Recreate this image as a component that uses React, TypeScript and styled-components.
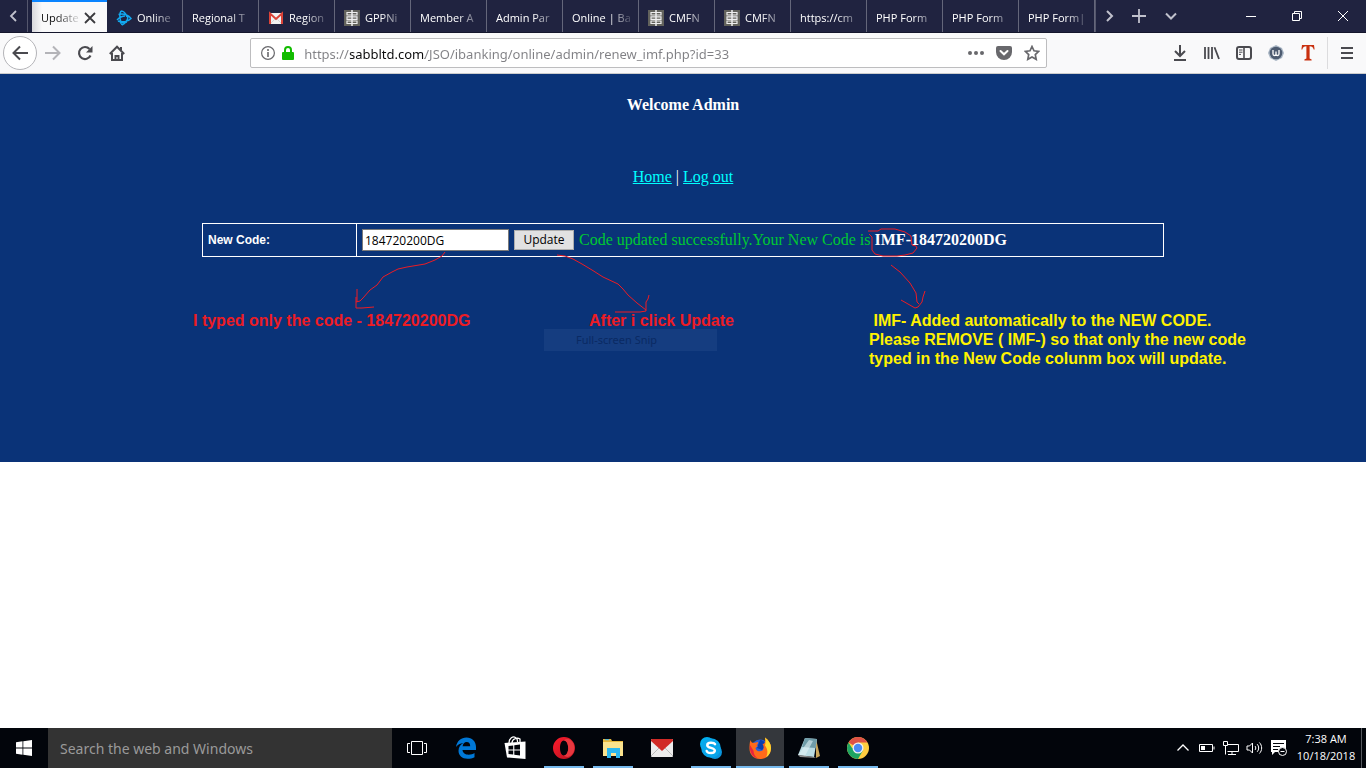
import React from "react";
import styled, { createGlobalStyle, css } from "styled-components";

const ui = `"Open Sans", "Noto Sans", sans-serif`;
const uiWide = `"Noto Sans", "Open Sans", sans-serif`;
const arial = `"Liberation Sans", Arial, sans-serif`;
const times = `"Liberation Serif", "Times New Roman", serif`;

const GlobalStyle = createGlobalStyle`
  *, *::before, *::after { box-sizing: border-box; }
  body { margin: 0; background: #fff; overflow-x: hidden; }
  button { font: inherit; color: inherit; border: 0; padding: 0; background: none; }
  svg { display: block; flex: none; }
`;

const Screen = styled.div`
  display: flex;
  flex-direction: column;
  min-height: 100vh;
`;

/* ---------- Tab strip ---------- */

const TabStrip = styled.header`
  display: flex;
  height: 33px;
  background: #202340;
  border-bottom: 1px solid #14162c;
  color: #fff;
  font: 500 11px/16px ${ui};
`;

const StripButton = styled.button<{ $width: number; $edge?: boolean }>`
  display: flex;
  flex: none;
  align-items: center;
  justify-content: center;
  width: ${(p) => p.$width}px;
  height: 32px;
  color: #c0c1cc;
  ${(p) => p.$edge && css`
    border-right: 1px solid #55576d;
  `}
`;

const TabList = styled.div`
  display: flex;
  flex: 0 1 auto;
  min-width: 0;
  margin-left: 4px;
  overflow: hidden;
`;

const Tab = styled.button<{ $active?: boolean }>`
  display: flex;
  flex: none;
  align-items: center;
  gap: 5px;
  width: 76px;
  height: 33px;
  padding: 2px 3px 0 9px;
  border-right: 1px solid #64667a;
  text-align: left;
  ${(p) => p.$active && css`
    width: 75px;
    border-right: 0;
    border-top: 2px solid #0a84ff;
    background: linear-gradient(90deg, #d8d8dc, #f9f9fa 10px);
    color: #0c0c0d;
    padding: 0 9px;
    gap: 0;
  `}
`;

const TabLabel = styled.span`
  flex: 1;
  min-width: 0;
  white-space: nowrap;
  mask-image: linear-gradient(90deg, #000 calc(100% - 26px), transparent);
`;

const StripTail = styled.div`
  display: flex;
  flex: none;
  border-left: 1px solid #55576d;
`;

const WindowControls = styled.div`
  display: flex;
  margin-left: auto;
`;

/* ---------- Navigation toolbar ---------- */

const Toolbar = styled.nav`
  display: flex;
  align-items: center;
  height: 41px;
  padding: 0 3px;
  background: #f9f9fa;
  border-bottom: 1px solid #ccc;
  color: #4a4a4f;
`;

const ToolButton = styled.button<{ $faded?: boolean }>`
  display: flex;
  flex: none;
  align-items: center;
  justify-content: center;
  width: 32px;
  height: 32px;
  color: ${(p) => (p.$faded ? "#b4b4b8" : "#4a4a4f")};
`;

const BackButton = styled(ToolButton)`
  width: 34px;
  height: 34px;
  border: 1px solid #b4b4b8;
  border-radius: 50%;
  background: #fff;
`;

const Spacer = styled.div`
  flex: 5 1 0;
`;

const AddressSlot = styled.div`
  flex: 34 1 0;
  min-width: 0;
`;

const AddressBar = styled.form`
  display: flex;
  align-items: center;
  height: 30px;
  padding: 0 0 0 8px;
  border: 1px solid #bdbdbf;
  border-radius: 2px;
  background: #fff;
  color: #6b6b6e;
`;

const AddressInput = styled.input`
  flex: 1;
  min-width: 0;
  height: 28px;
  margin-left: 8px;
  padding: 2px 0 0;
  border: 0;
  outline: 0;
  font: 13px/26px ${uiWide};
  color: transparent;
  background: linear-gradient(90deg, #808084 46px, #0c0c0d 46px, #0c0c0d 121px, #808084 121px);
  background-clip: text;
`;

const BarIcon = styled.button`
  display: flex;
  flex: none;
  align-items: center;
  justify-content: center;
  width: 28px;
  height: 28px;
  color: #68686c;
`;

const SiteInfo = styled(BarIcon)`
  width: 37px;
  gap: 7px;
`;

const MenuSlot = styled.div`
  display: flex;
  margin-left: 3px;
  padding-left: 3px;
  border-left: 1px solid #dcdcde;
`;

/* ---------- Web page ---------- */

const Page = styled.main`
  display: flex;
  flex-direction: column;
  align-items: center;
  padding: 22px 0 94px;
  background: #0a3378;
  color: #fff;
  font: 16px/18px ${times};
`;

const Heading = styled.h1`
  margin: 0 0 54px;
  font-size: 16px;
  font-weight: bold;
`;

const Links = styled.p`
  margin: 0 0 37px;
  a { color: #0ff; }
`;

const Stage = styled.div`
  position: relative;
  width: 980px;
`;

const CodeTable = styled.table`
  width: 962px;
  height: 34px;
  margin: 0 9px;
  border-collapse: collapse;
  th, td {
    padding: 0 5px;
    border: 1px solid #fff;
    text-align: left;
    white-space: nowrap;
  }
  th {
    width: 154px;
    font: bold 12px/16px ${arial};
  }
`;

const Fields = styled.div`
  display: flex;
  align-items: center;
  gap: 5px;
`;

const CodeInput = styled.input`
  width: 147px;
  height: 22px;
  padding: 0 2px;
  border: 1px solid #7a7a7a;
  background: #fff;
  color: #000;
  font: 12px/18px ${ui};
`;

const UpdateButton = styled.button`
  width: 60px;
  height: 20px;
  border: 1px solid #adadad;
  background: #e1e1e1;
  color: #000;
  font: 12px/18px ${ui};
`;

const Result = styled.span`
  color: #00c832;
  b { color: #fff; }
`;

const Notes = styled.div`
  display: grid;
  grid-template-columns: 396px 280px 1fr;
  margin-top: 54px;
  font: bold 16px/19px ${arial};
`;

const Note = styled.p<{ $tone: string }>`
  margin: 0;
  color: ${(p) => p.$tone};
  white-space: pre;
`;

const GhostMenu = styled.div`
  position: absolute;
  top: 106px;
  left: 351px;
  width: 173px;
  height: 22px;
  padding-left: 32px;
  background: #153d80;
  color: #0a2a63;
  font: 11px/22px ${uiWide};
`;

const Ink = styled.svg`
  position: absolute;
  top: 0;
  left: 0;
  overflow: visible;
  pointer-events: none;
`;

/* ---------- Taskbar ---------- */

const Taskbar = styled.footer`
  display: flex;
  height: 40px;
  margin-top: auto;
  background: #02050b;
  color: #fff;
`;

const StartButton = styled.button`
  display: flex;
  flex: none;
  align-items: center;
  justify-content: center;
  width: 48px;
`;

const SearchBox = styled.input`
  flex: 0 1 344px;
  min-width: 0;
  padding: 1px 12px 0;
  border: 0;
  background: #333;
  color: #fff;
  font: 14px/20px ${uiWide};
  &::placeholder { color: #9a9a9a; opacity: 1; }
`;

const Apps = styled.div`
  display: flex;
  gap: 1px;
  margin-left: 1px;
`;

const AppButton = styled.button<{ $running?: boolean; $active?: boolean }>`
  position: relative;
  display: flex;
  align-items: center;
  justify-content: center;
  width: 48px;
  background: ${(p) => (p.$active ? "#34373c" : "none")};
  &::after {
    content: "";
    position: absolute;
    bottom: 0;
    left: ${(p) => (p.$active ? 0 : 4)}px;
    right: ${(p) => (p.$active ? 0 : 4)}px;
    height: 2px;
    background: ${(p) => (p.$running ? "#76b9ed" : "none")};
  }
`;

const Tray = styled.div`
  display: flex;
  margin-left: auto;
`;

const TrayButton = styled.button`
  display: flex;
  align-items: center;
  justify-content: center;
  width: 24px;
`;

const Clock = styled.button`
  width: 71px;
  padding-bottom: 3px;
  border-right: 1px solid #55585e;
  font: 11px/17px ${ui};
  text-align: center;
`;

const ShowDesktop = styled.button`
  width: 4px;
`;

/* ---------- Drawings ---------- */

type LineProps = { d: string; w?: number; s?: number; color?: string };
const Line = ({ d, w = 2, s = 16, color = "currentColor" }: LineProps) => (
  <svg width={s} height={s} viewBox="0 0 16 16" fill="none" stroke={color} strokeWidth={w} aria-hidden>
    <path d={d} />
  </svg>
);

const BattleIcon = () => (
  <svg width="16" height="16" viewBox="0 0 16 16" fill="none" stroke="#12a9f0" strokeWidth="1.5">
    <path d="M5 1c-2 3-1 9 1 14M5 1c3 0 5 3 6 6M2.500 4.500C7 3.500 12 5 15 8.500 12 12 6 12.500 2 11M6 15c3-1 6-5 6-9M1 10c2-2 5-4 8-4M4 13l7-1" />
  </svg>
);

const GmailIcon = () => (
  <svg width="16" height="16" viewBox="0 0 16 16">
    <path d="M1 3h14v11H1z" fill="#f2f2f2" />
    <path d="M2 14V3.500l6 5.500 6-5.500V14" fill="none" stroke="#dc4338" strokeWidth="2" />
    <path d="M3 13l4-4M13 13L9 9" stroke="#d5d5d5" />
  </svg>
);

const CmsIcon = () => (
  <svg width="16" height="16" viewBox="0 0 16 16">
    <path d="M0 0h16v16H0z" fill="#62625c" />
    <path d="M3 2.500h10v2.500H3zM3 6.800h10v2.500H3zM3 11h10v2.500H3z" fill="none" stroke="#eee" strokeWidth="1.200" />
    <path d="M8 0v16" stroke="#eee" strokeWidth="1.500" />
  </svg>
);

const InfoIcon = () => (
  <svg width="14" height="14" viewBox="0 0 14 14" fill="none" stroke="currentColor">
    <circle cx="7" cy="7" r="6.400" strokeWidth="1.2" />
    <path d="M7 3v2M7 6v5" strokeWidth="1.6" />
  </svg>
);

const LockIcon = () => (
  <svg width="12" height="14" viewBox="0 0 12 14">
    <rect y="6" width="12" height="8" rx="1" fill="#12bc00" />
    <path d="M3 7V4a3 3 0 0 1 6 0v3" fill="none" stroke="#12bc00" strokeWidth="2" />
  </svg>
);

const DotsIcon = () => (
  <svg width="16" height="16" viewBox="0 0 16 16" fill="currentColor">
    <circle cx="2" cy="8" r="2" /><circle cx="8" cy="8" r="2" /><circle cx="14" cy="8" r="2" />
  </svg>
);

const PocketIcon = () => (
  <svg width="16" height="16" viewBox="0 0 16 16">
    <path d="M2 1h12a2 2 0 0 1 2 2v4a8 8 0 0 1-16 0V3a2 2 0 0 1 2-2z" fill="currentColor" />
    <path d="M4.500 6L8 9.300 11.500 6" fill="none" stroke="#fff" strokeWidth="2" strokeLinecap="round" />
  </svg>
);

const HomeIcon = () => (
  <svg width="16" height="16" viewBox="0 0 16 16" fill="none" stroke="currentColor" strokeWidth="2">
    <path d="M.8 9L8 1.700 15.200 9M3 8v7h10V8M12 2v3" />
    <path d="M6.500 15v-4h3v4" />
  </svg>
);

const ReloadIcon = () => (
  <svg width="16" height="16" viewBox="0 0 16 16" fill="none" stroke="currentColor" strokeWidth="2.2">
    <path d="M13.500 10.500A6 6 0 1 1 12.500 4" />
    <path d="M15.500 1v6.500H9z" fill="currentColor" stroke="none" />
  </svg>
);

const SidebarIcon = () => (
  <svg width="16" height="16" viewBox="0 0 16 16" fill="none" stroke="currentColor">
    <rect x="1" y="2" width="14" height="12" rx="2" strokeWidth="2" />
    <path d="M8 2v12" strokeWidth="1.600" />
    <path d="M3 5h3.500M3 7.200h3.500M3 9.400h2" />
  </svg>
);

const LibraryIcon = () => (
  <svg width="16" height="16" viewBox="0 0 16 16" fill="none" stroke="currentColor" strokeWidth="1.800">
    <path d="M1 2v12M4.500 2v12M8 2v12M10.500 2.300L15 14" />
  </svg>
);

const ShieldIcon = () => (
  <svg width="16" height="16" viewBox="0 0 16 16">
    <path d="M8 0l6 3 2 5-2 5-6 3-6-3-2-5 2-5z" fill="#a9b6c4" />
    <circle cx="8" cy="8" r="6.300" fill="#4d5b70" />
    <path d="M5 5v4c0 2 3 2 3 0V6.500V9c0 2 3 2 3 0V5" fill="none" stroke="#fff" strokeWidth="1.300" />
  </svg>
);

const RedTIcon = () => (
  <svg width="14" height="16" viewBox="0 0 14 16">
    <path d="M1 0h12l.6 4.500h-.9C12 2.300 11 1.300 8.600 1.300V13.600l2 1v.9H3.400v-.9l2-1V1.300C3 1.300 2 2.300 1.300 4.500H.4z" fill="#c9300f" />
  </svg>
);

const WindowsLogo = () => (
  <svg width="16" height="16" viewBox="0 0 16 16" fill="#fff">
    <path d="M0 2.200l6.500-.9v6.200H0zM7.300 1.200L16 0v7.500H7.300zM0 8.400h6.500v6.300L0 13.800zM7.300 8.400H16V16l-8.700-1.200z" />
  </svg>
);

const TaskViewIcon = () => (
  <svg width="20" height="16" viewBox="0 0 20 16" fill="none" stroke="#fff">
    <path d="M4.500 1.500h11v13h-11zM3 3.500H.5v9H3M17 3.500h2.500v9H17" />
  </svg>
);

const EdgeIcon = () => (
  <svg width="22" height="22" viewBox="0 0 22 22">
    <path d="M1 10C2 4 6 .5 11.500.5 17 .5 21 4.500 21 10v3H7.500c.2 3 3 4.700 6 4.700 2.500 0 4.500-.7 6-1.700v4.200c-2 1.100-4.300 1.600-7 1.600-5.500 0-9-3.300-9-8 0-3.500 2-6.300 5-7.700C5 6.500 2.600 7.800 1 10zm6.600-.8h7.600C15.200 6.600 14 5 11.600 5 9.400 5 8 6.700 7.600 9.200z" fill="#0078d7" />
  </svg>
);

const StoreIcon = () => (
  <svg width="22" height="24" viewBox="0 0 22 24">
    <path d="M5 7C5 2 9 0 11.500 1.500 14 3 13.500 5 13.500 6M8 7c0-4 5-6 8-4v4" fill="none" stroke="#fff" strokeWidth="1.300" />
    <path d="M.5 7L21.500 5.500V23L3 21.500z" fill="#fff" />
    <path d="M4.500 10l4.700-.6v4H4.500zM10.300 9.300l5.700-.8v5h-5.700zM4.500 14.500h4.700v4.100l-4.700-.5zM10.300 14.500H16v5l-5.700-.8z" fill="#02050b" />
  </svg>
);

const OperaIcon = () => (
  <svg width="22" height="22" viewBox="0 0 22 22">
    <defs>
      <linearGradient id="opera" x1="0" y1="0" x2="1" y2="1">
        <stop offset="0" stopColor="#ff1b2d" /><stop offset="1" stopColor="#b3121e" />
      </linearGradient>
    </defs>
    <path fillRule="evenodd" d="M11 0a11 11 0 1 1 0 22 11 11 0 0 1 0-22zm0 3.500C8.600 3.500 7 6.500 7 11s1.600 7.500 4 7.500 4.200-3 4.200-7.500S13.400 3.500 11 3.500z" fill="url(#opera)" />
    <path d="M11 3.500c2-2 5-1.800 7 0a10 10 0 0 1 0 15c-2 1.800-5 2-7 0 2.800-.4 4.200-3.500 4.200-7.500S13.600 3.800 11 3.500z" fill="#e8383f" />
  </svg>
);

const ExplorerIcon = () => (
  <svg width="22" height="20" viewBox="0 0 22 20">
    <path d="M1 1h8l1 2h11v15H1z" fill="#e8b83c" />
    <path d="M1 4h20v14H1z" fill="#fbe38e" />
    <path d="M3 1.700h4" stroke="#3fb6e8" />
    <path d="M5 10h13v10h-4v-5H9v5H5z" fill="#2cb8f0" />
  </svg>
);

const MailIcon = () => (
  <svg width="22" height="18" viewBox="0 0 22 18">
    <rect width="22" height="18" rx="1" fill="#ececec" />
    <path d="M0 17l8-8M22 17l-8-8" stroke="#bbb" />
    <path d="M0 1a1 1 0 0 1 1-1h20a1 1 0 0 1 1 1v1L11 12 0 2z" fill="#d12a26" />
  </svg>
);

const SkypeIcon = () => (
  <svg width="22" height="22" viewBox="0 0 22 22">
    <circle cx="7" cy="7" r="7" fill="#00aff0" />
    <circle cx="15" cy="15" r="7" fill="#0a94dc" />
    <circle cx="11" cy="11" r="9.800" fill="#08a6ea" />
    <path d="M15 7.200C14 5.500 7.300 5 7.300 8.200c0 3.300 7.500 2 7.500 5.400 0 3.400-7.300 3-8.100.4" fill="none" stroke="#fff" strokeWidth="2.500" strokeLinecap="round" />
  </svg>
);

const FirefoxIcon = () => (
  <svg width="22" height="22" viewBox="0 0 22 22">
    <circle cx="11" cy="11.500" r="9" fill="#2a5fd8" />
    <path d="M11 3c3 0 5 2 6 5l-4 5-5-2z" fill="#0a3fae" />
    <path d="M1.500 3C2 5 3 6 4.500 6L9 5c0 1.500 0 2-1.500 3.200L9 9c-1 1-2 1-2.500 2.500 1 3 5 3.500 7 2 2-2 1-5 0-6.500 3 0 3-4 2.500-6.500 4 3 6 6.500 6 10.500A10.500 10.500 0 0 1 11 22C4.500 22 .5 17 .5 12c0-4 0-6 1-9z" fill="#ff6a1a" />
    <path d="M16 .5c4 3 6 6.500 6 10.500 0 4-2 7.500-5 9.500 2-4 2-8-1-12 1-3 .5-5.500 0-8z" fill="#ffd92e" />
    <path d="M1 8c-1 6 2 12 8 13.700-3-2-4.500-5-4.500-8z" fill="#e8233f" />
  </svg>
);

const NotepadIcon = () => (
  <svg width="22" height="22" viewBox="0 0 22 22">
    <path d="M18 2l4 17-4 2z" fill="#c9a55a" />
    <path d="M7 1l12 1-3 18L0 18z" fill="#b9dbe3" />
    <path d="M7 1l12 1-1.500 9L4 10z" fill="#6f9ca8" />
    <path d="M3 14l8-11 4 1L7 19l-7-1z" fill="#e2f2f5" opacity=".6" />
    <path d="M0 18l16 2 2 1-16-1z" fill="#8b8b8b" />
  </svg>
);

const ChromeIcon = () => (
  <svg width="22" height="22" viewBox="0 0 22 22">
    <circle cx="11" cy="11" r="11" fill="#ffcd40" />
    <path d="M11 11L1.500 5.500A11 11 0 0 1 20.500 5.500H11z" fill="#de5246" />
    <path d="M1.500 5.500A11 11 0 0 0 11 22l4.800-8.200L11 11H5z" fill="#1da462" />
    <circle cx="11" cy="11" r="5.500" fill="#f1f1f1" />
    <circle cx="11" cy="11" r="4.200" fill="#4a8af4" />
  </svg>
);

const BatteryIcon = () => (
  <svg width="16" height="16" viewBox="0 0 16 16" fill="none" stroke="#fff">
    <path d="M.5 4.500h13v7H.5zM15 6.500v3" /><path d="M2 6h4v4H2z" fill="#fff" stroke="none" />
  </svg>
);

const NetworkIcon = () => (
  <svg width="18" height="16" viewBox="0 0 18 16" fill="none" stroke="#fff">
    <path d="M5.500 4.500h11v7h-11M1.500 1.500h4v4h-4zM3.500 6v8.500M6 14.500h8M10 12v2.500" />
  </svg>
);

const SpeakerIcon = () => (
  <svg width="18" height="16" viewBox="0 0 18 16" fill="none" stroke="#fff">
    <path d="M1 6h2.500L6.500 3v10L3.500 10H1zM9 6c1 1 1 3 0 4M11.200 4.200c2 2 2 5.600 0 7.600M13.400 2.500c3 3 3 8 0 11" />
  </svg>
);

const ActionIcon = () => (
  <svg width="18" height="18" viewBox="0 0 18 18">
    <path d="M1 1h15v12H5l-3 3v-3H1z" fill="#fff" />
    <path d="M3 4.500h11M3 7.500h7M3 10.500h5" stroke="#02050b" />
    <circle cx="12.500" cy="12.500" r="4" fill="#02050b" stroke="#fff" />
    <path d="M10.500 12.500h4" stroke="#fff" />
  </svg>
);

/* ---------- Data ---------- */

const tabs: { label: string; icon?: React.ReactNode }[] = [
  { label: "Online", icon: <BattleIcon /> },
  { label: "Regional T" },
  { label: "Region", icon: <GmailIcon /> },
  { label: "GPPNi", icon: <CmsIcon /> },
  { label: "Member A" },
  { label: "Admin Par" },
  { label: "Online | Ba" },
  { label: "CMFN", icon: <CmsIcon /> },
  { label: "CMFN", icon: <CmsIcon /> },
  { label: "https://cm" },
  { label: "PHP Form" },
  { label: "PHP Form" },
  { label: "PHP Form|" },
];

const apps: { name: string; icon: React.ReactNode; running?: boolean; active?: boolean }[] = [
  { name: "Task View", icon: <TaskViewIcon /> },
  { name: "Edge", icon: <EdgeIcon /> },
  { name: "Store", icon: <StoreIcon /> },
  { name: "Opera", icon: <OperaIcon />, running: true },
  { name: "File Explorer", icon: <ExplorerIcon />, running: true },
  { name: "Mail", icon: <MailIcon /> },
  { name: "Skype", icon: <SkypeIcon />, running: true },
  { name: "Firefox", icon: <FirefoxIcon />, running: true, active: true },
  { name: "Notepad", icon: <NotepadIcon />, running: true },
  { name: "Chrome", icon: <ChromeIcon />, running: true },
];

const strokes = [
  "M445 252L442 256 435 260 425 264 407 267 398 269 392 272 383 277 377 285 370 290 363 298 360 301 356 302M357 289V302M356 297V308L362 308 374 307",
  "M557 255L565 256 573 259 582 264 592 270 603 277 618 284 623 289 628 295 637 303 646 310M649 295L648 299 646 302V311L640 312H615",
  "M891 265L900 272 910 283 916 293 917 302 919 304M901 300L908 304 915 308 918 307 922 302 923 297 925 291",
  "M868 231H878L881 229H895L905 232 911 236 912 245 916 246 917 248 913 253 905 255 897 256H883L875 254 872 250V237L869 234",
];

export default function App() {
  return (
    <Screen>
      <GlobalStyle />
      <TabStrip>
        <StripButton $width={28} $edge aria-label="Scroll tabs left">
          <Line d="M10 3L5 8l5 5" w={1.8} />
        </StripButton>
        <TabList role="tablist">
          <Tab $active role="tab" aria-selected>
            <TabLabel>Update</TabLabel>
            <Line d="M3 3l10 10M13 3L3 13" w={1.8} color="#3a3a3e" />
          </Tab>
          {tabs.map((t, i) => (
            <Tab key={i} role="tab">
              {t.icon}
              <TabLabel>{t.label}</TabLabel>
            </Tab>
          ))}
        </TabList>
        <StripTail>
          <StripButton $width={28} aria-label="Scroll tabs right">
            <Line d="M5 3l5 5-5 5" w={2} />
          </StripButton>
          <StripButton $width={30} aria-label="New tab">
            <Line d="M8 1v14M1 8h14" w={1.8} />
          </StripButton>
          <StripButton $width={34} aria-label="List all tabs">
            <Line d="M3 5.500l5 5 5-5" w={2} />
          </StripButton>
        </StripTail>
        <WindowControls>
          <StripButton $width={46} aria-label="Minimize"><Line d="M3 8.500h10" w={1} color="#fff" /></StripButton>
          <StripButton $width={46} aria-label="Restore">
            <Line d="M3.500 5.500h7v7h-7zM5.500 5V3.500h7v7H11" w={1} color="#fff" />
          </StripButton>
          <StripButton $width={46} aria-label="Close"><Line d="M3 3l10 10M13 3L3 13" w={1} color="#fff" /></StripButton>
        </WindowControls>
      </TabStrip>

      <Toolbar>
        <BackButton aria-label="Back"><Line d="M16 8H1.500M8 1.500L1.500 8 8 14.500" /></BackButton>
        <ToolButton $faded aria-label="Forward"><Line d="M0 8h14.500M8 1.500L14.500 8 8 14.500" /></ToolButton>
        <ToolButton aria-label="Reload"><ReloadIcon /></ToolButton>
        <ToolButton aria-label="Home"><HomeIcon /></ToolButton>
        <Spacer />
        <AddressSlot>
          <AddressBar onSubmit={(e) => e.preventDefault()}>
            <SiteInfo type="button" aria-label="Site information"><InfoIcon /><LockIcon /></SiteInfo>
            <AddressInput
              aria-label="Address"
              defaultValue="https://sabbltd.com/JSO/ibanking/online/admin/renew_imf.php?id=33"
            />
            <BarIcon type="button" aria-label="Page actions"><DotsIcon /></BarIcon>
            <BarIcon type="button" aria-label="Save to Pocket"><PocketIcon /></BarIcon>
            <BarIcon type="button" aria-label="Bookmark">
              <Line d="M8 1.500l2 4.300 4.700.6-3.400 3.200.9 4.700L8 12l-4.200 2.300.9-4.700L1.300 6.400 6 5.800z" w={1.7} />
            </BarIcon>
          </AddressBar>
        </AddressSlot>
        <Spacer />
        <ToolButton aria-label="Downloads"><Line d="M8 0v11M3 6l5 5 5-5M2 15h12" /></ToolButton>
        <ToolButton aria-label="Library"><LibraryIcon /></ToolButton>
        <ToolButton aria-label="Sidebars"><SidebarIcon /></ToolButton>
        <ToolButton aria-label="Site reputation"><ShieldIcon /></ToolButton>
        <ToolButton aria-label="Text tool"><RedTIcon /></ToolButton>
        <MenuSlot>
          <ToolButton aria-label="Menu"><Line d="M2 3h12M2 8h12M2 13h12" /></ToolButton>
        </MenuSlot>
      </Toolbar>

      <Page>
        <Heading>Welcome Admin</Heading>
        <Links>
          <a href="#home">Home</a> | <a href="#logout">Log out</a>
        </Links>
        <Stage>
          <CodeTable>
            <tbody>
              <tr>
                <th scope="row"><label htmlFor="code">New Code:</label></th>
                <td>
                  <Fields>
                    <CodeInput id="code" defaultValue="184720200DG" />
                    <UpdateButton>Update</UpdateButton>
                    <Result>Code updated successfully.Your New Code is <b>IMF-184720200DG</b></Result>
                  </Fields>
                </td>
              </tr>
            </tbody>
          </CodeTable>
          <GhostMenu>Full-screen Snip</GhostMenu>
          <Notes>
            <Note $tone="#ed1c24">I typed only the code - 184720200DG</Note>
            <Note $tone="#ed1c24">After i click Update</Note>
            <Note $tone="#fff200">
              {" IMF- Added automatically to the NEW CODE.\nPlease REMOVE ( IMF-) so that only the new code\ntyped in the New Code colunm box will update."}
            </Note>
          </Notes>
          <Ink width="980" height="146" viewBox="193 223 980 146" fill="none" stroke="#ed1c24" aria-hidden>
            {strokes.map((d) => <path key={d} d={d} />)}
          </Ink>
        </Stage>
      </Page>

      <Taskbar>
        <StartButton aria-label="Start"><WindowsLogo /></StartButton>
        <SearchBox aria-label="Search" placeholder="Search the web and Windows" />
        <Apps>
          {apps.map((a) => (
            <AppButton key={a.name} aria-label={a.name} $running={a.running} $active={a.active}>
              {a.icon}
            </AppButton>
          ))}
        </Apps>
        <Tray>
          <TrayButton aria-label="Hidden icons"><Line d="M2.500 10.500L8 5l5.500 5.500" w={1.3} color="#fff" /></TrayButton>
          <TrayButton aria-label="Battery"><BatteryIcon /></TrayButton>
          <TrayButton aria-label="Network"><NetworkIcon /></TrayButton>
          <TrayButton aria-label="Volume"><SpeakerIcon /></TrayButton>
          <TrayButton aria-label="Notifications"><ActionIcon /></TrayButton>
          <Clock>7:38 AM<br />10/18/2018</Clock>
          <ShowDesktop aria-label="Show desktop" />
        </Tray>
      </Taskbar>
    </Screen>
  );
}
